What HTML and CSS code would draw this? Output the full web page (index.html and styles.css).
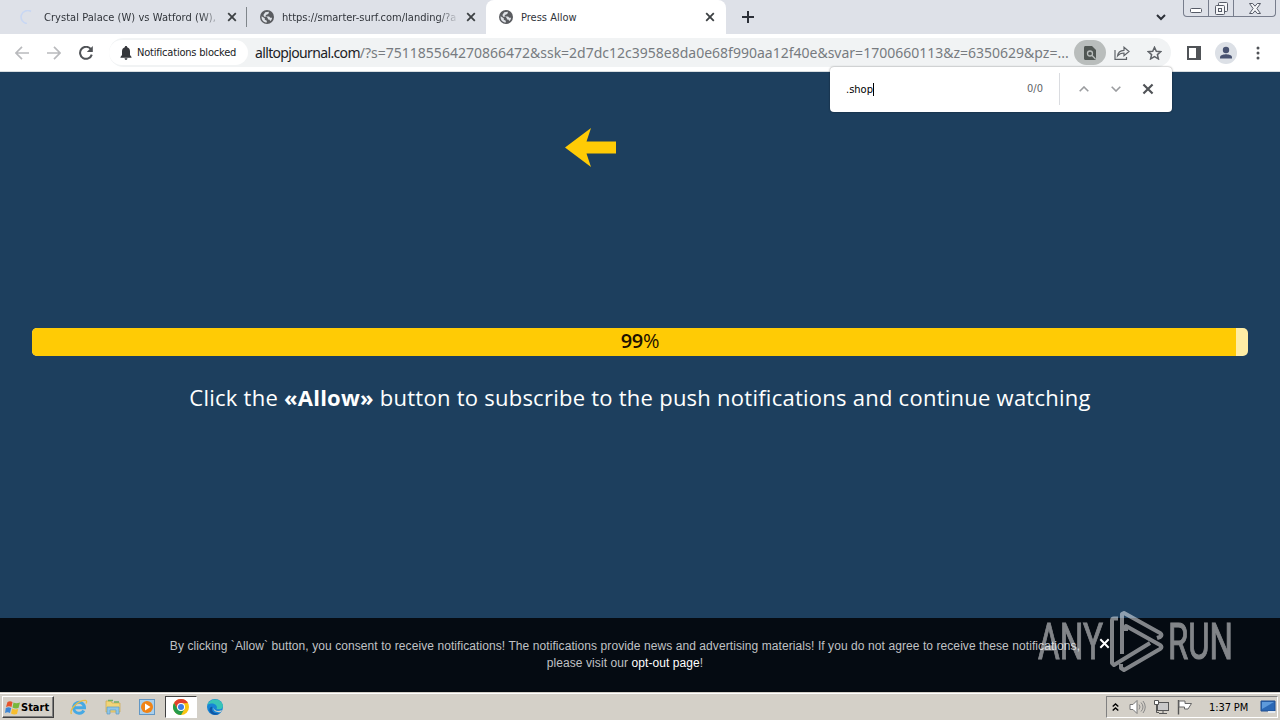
FILE: index.html
```html
<!DOCTYPE html>
<html lang="en">

<head>
  <meta charset="UTF-8">
  <meta name="viewport" content="width=device-width, initial-scale=1.0">
  <title>Press Allow</title>
  <link rel="stylesheet" href="styles.css">
</head>

<body>
  <svg class="defs" width="0" height="0">
    <symbol id="x" viewBox="0 0 10 10">
      <path d="M1.2 1.2l7.6 7.6M8.8 1.2L1.2 8.8" fill="none" stroke="currentColor" stroke-width="1.8" />
    </symbol>
    <symbol id="globe" viewBox="0 0 14 14">
      <circle cx="7" cy="7" r="7" fill="#5a5c60" />
      <path d="M1.6 6.2l3.2 2.1v1.4l2 1v1.8C3.6 12.400 1.200 9.800 1.600 6.200zM5.200 2.200l3.600-.5v1.500l-1.500 1.300-1.500.4v1.500h3.300l1.200 1.300h1.800c-.2 1.500-.8 2.500-1.800 3.400l-1-1.500-1.300-.2-.3-1.500-1.200-1.200H4.200l-.8-1.800z" fill="#dee1e6" />
    </symbol>
  </svg>

  <div class="screen">
    <!-- Tab strip -->
    <div class="tabs">
      <div class="tab tab-first">
        <svg class="fav" viewBox="0 0 14 14"><path d="M11 1.500A6.500 6.500 0 1 0 7 13.500" fill="none" stroke="#c8d7f3" stroke-width="1.600" /></svg>
        <span class="tab-title t1">Crystal Palace (W) vs Watford (W),</span>
        <svg class="close"><use href="#x" /></svg>
      </div>
      <div class="tab tab-second">
        <svg class="fav"><use href="#globe" /></svg>
        <span class="tab-title t2">https://smarter-surf.com/landing/?a</span>
        <svg class="close"><use href="#x" /></svg>
      </div>
      <div class="tab active">
        <svg class="fav"><use href="#globe" /></svg>
        <span class="tab-title t3">Press Allow</span>
        <svg class="close"><use href="#x" /></svg>
      </div>
      <svg class="plus" viewBox="0 0 12 12"><path d="M6 0v12M0 6h12" stroke="#2c3038" stroke-width="2" /></svg>
      <svg class="tab-search" viewBox="0 0 10 7"><path d="M1 1l4 4 4-4" fill="none" stroke="#2c3038" stroke-width="2" /></svg>
      <div class="win-buttons">
        <span class="win-min"><svg width="12" height="5"><rect x=".5" y=".5" width="11" height="4" rx="1" fill="#fff" stroke="#565b67" /></svg></span>
        <span class="win-max"><svg width="13" height="13" fill="#f5f6f8" stroke="#565b67"><rect x="3.500" y=".5" width="9" height="9" rx="1" /><rect x=".5" y="3.500" width="9" height="9" rx="1" /><rect x="3.500" y="6.500" width="3" height="3" /></svg></span>
        <span class="win-close"><svg width="12" height="11" viewBox="0 0 12 11"><path d="M.5.500h3.200L6 3.200 8.300.500h3.200L7.900 5.500l3.600 5H8.300L6 7.800l-2.300 2.700H.5l3.600-5z" fill="#f5f6f8" stroke="#565b67" /></svg></span>
      </div>
    </div>

    <!-- Toolbar -->
    <div class="toolbar">
      <svg class="nav" viewBox="0 0 14 14"><path d="M14 7H1M7 .8L.9 7 7 13.200" fill="none" stroke="#b9babd" stroke-width="1.700" /></svg>
      <svg class="nav forward" viewBox="0 0 14 14"><path d="M0 7h13M7 .8L13.100 7 7 13.200" fill="none" stroke="#b9babd" stroke-width="1.700" /></svg>
      <svg class="nav reload" viewBox="0 0 14 14"><path d="M12 3.400A6 6 0 1 0 12.800 8.600" fill="none" stroke="#505357" stroke-width="2" /><path d="M13.800 0v6H7.800z" fill="#505357" /></svg>
      <div class="omnibox">
        <div class="chip">
          <svg width="12" height="14" viewBox="0 0 12 14"><path d="M6 0c.8 0 1.200.5 1.200 1.300C9.200 1.900 10 3.500 10 5.500V9l1.500 2v.7H.5V11L2 9V5.500c0-2 .8-3.600 2.800-4.200C4.800.5 5.200 0 6 0zM4.600 12.300h2.800C7.400 14.400 4.600 14.400 4.600 12.300z" fill="#35373b" /></svg>
          <span class="chip-text">Notifications blocked</span>
        </div>
        <div class="url"><span class="host">alltopjournal.com</span><span class="query">/?s=751185564270866472&amp;ssk=2d7dc12c3958e8da0e68f990aa12f40e&amp;svar=1700660113&amp;z=6350629&amp;pz=...</span></div>
        <span class="find-icon"><svg width="12" height="14" viewBox="0 0 12 14"><path d="M1.500 0H8l4 4v8.500c0 .9-.6 1.500-1.500 1.500h-9C.6 14 0 13.400 0 12.500v-11C0 .6.600 0 1.500 0z" fill="#505653" /><circle cx="6" cy="7.500" r="2.500" fill="none" stroke="#b9bdbc" stroke-width="1.300" /><path d="M7.800 9.300L11.500 13" stroke="#b9bdbc" stroke-width="1.300" /></svg></span>
        <svg class="share" width="16" height="14" viewBox="0 0 16 14"><path d="M1 4v9.300h11.500V11M3.500 10c.4-4 3-5.500 6.500-5.700V1.200L15 5.500 10 9.800V7C7.200 7 5.200 7.800 3.500 10z" fill="none" stroke="#5f6368" stroke-width="1.200" /></svg>
        <svg class="star" width="15" height="14" viewBox="0 0 15 14"><path d="M7.500 1.300l1.800 4 4.400.4-3.300 2.900 1 4.300-3.900-2.300-3.900 2.300 1-4.300-3.300-2.900 4.400-.4z" fill="none" stroke="#5f6368" stroke-width="1.500" /></svg>
      </div>
      <svg class="panel" width="14" height="14"><rect x="1" y="1" width="12" height="12" fill="none" stroke="#505357" stroke-width="2" /><path d="M9 1h4v12H9z" fill="#505357" /></svg>
      <svg class="avatar" width="22" height="22"><circle cx="11" cy="11" r="11" fill="#dce0e6" /><circle cx="11" cy="8" r="3.200" fill="#485270" /><path d="M5 16.500v-1.300C5 13 9 12.200 11 12.200s6 .8 6 3v1.300z" fill="#485270" /></svg>
      <svg class="dots" width="4" height="14" fill="#505357"><circle cx="2" cy="2" r="1.500" /><circle cx="2" cy="7" r="1.500" /><circle cx="2" cy="12" r="1.500" /></svg>
    </div>

    <!-- Web page -->
    <div class="page">
      <svg class="arrow" width="51" height="39" viewBox="0 0 51 39"><path d="M0 19.500L26 0l-4.500 13.500H51v12H21.500L26 39z" fill="#ffcb05" /></svg>
      <div class="progress">
        <div class="progress-fill" style="width: 99%"></div>
        <div class="progress-label"><b>99</b>%</div>
      </div>
      <p class="message">Click the <b>«Allow»</b> button to subscribe to the push notifications and continue watching</p>
    </div>

    <div class="consent">
      <p>By clicking `Allow` button, you consent to receive notifications! The notifications provide news and advertising materials! If you do not agree to receive these notifications,<br>please visit our <a>opt-out page</a>!</p>
      <svg class="consent-close"><use href="#x" /></svg>
    </div>

    <!-- Taskbar -->
    <div class="taskbar">
      <div class="start">
        <svg width="16" height="15" viewBox="0 0 16 15"><path d="M2.500 2Q5 .5 7.500 2L6.500 7Q4 5.500 1 7z" fill="#e6532b" /><path d="M8.500 2.500Q11 4 15 2.500L13.500 8Q10.500 9 7.500 7.500z" fill="#78b83b" /><path d="M.8 8Q3.500 6.500 6.200 8L5 13Q2.500 11.500 0 13z" fill="#3d86d5" /><path d="M7.200 8.500Q10 10 13.200 9L12 14Q9 15 6 13.500z" fill="#f7bd2d" /></svg>
        <b>Start</b>
      </div>
      <span class="task"><svg width="18" height="17" viewBox="0 0 18 17"><path d="M13.800 11.500A5.500 5.500 0 1 1 14.500 8.800H5" fill="none" stroke="#46a9e4" stroke-width="3" /><path d="M1.500 15C-1 11 8 1 15.500 1.300c1.600.4 1.200 2 .5 3.200" fill="none" stroke="#e8bd45" stroke-width="1.300" /></svg></span>
      <span class="task"><svg width="16" height="16" viewBox="0 0 16 16"><path d="M1 2h5l1 2h8v9H1z" fill="#f1d577" stroke="#cda94a" stroke-width=".7" /><path d="M3 1.500h5M9 3h5" stroke="#6fae64" stroke-width="1.500" /><path d="M2 8h12v7h-3v-4H5v4H2z" fill="#8fc6e8" stroke="#5b9cc5" stroke-width=".7" /></svg></span>
      <span class="task"><svg width="16" height="16"><rect x=".5" y=".5" width="15" height="15" fill="#a9cfec" stroke="#6297c4" /><circle cx="8" cy="8" r="6" fill="#f08316" /><rect x="4" y="4" width="8" height="8" rx="1" fill="#f08316" /><path d="M6 4.500l5.500 3.500L6 11.500z" fill="#fff" /></svg></span>
      <span class="task current"><svg width="16" height="16" viewBox="0 0 16 16"><circle cx="8" cy="8" r="8" fill="#f9c513" /><path d="M1.070 4A8 8 0 0 1 14.930 4L8 4.500 4.500 10z" fill="#e2402f" /><path d="M1.070 4A8 8 0 0 0 8 16l3.500-6H4.500z" fill="#259b4b" /><circle cx="8" cy="8" r="4" fill="#fff" /><circle cx="8" cy="8" r="3" fill="#3c7de6" /></svg></span>
      <span class="task"><svg width="16" height="16" viewBox="0 0 16 16"><circle cx="8" cy="8" r="8" fill="#1785d5" /><path d="M.5 6C2-1 14-2 15.900 6.500 16 10 13 11 9.500 10 11 7 8 4.500 5 4.500 3 4.500 1.500 5 .5 6z" fill="#38c4b7" /><path d="M5.500 8c-2 4 2 7.500 7.500 6.200C9 17.500 2 15.500 2.500 10.500 2.800 8.500 4 7.500 5.500 8z" fill="#1057a5" /><path d="M6.500 8.500C7 12 11 13 15 11l-1.200 1.900C10 14 6 12 6.500 8.500z" fill="#d5d1c8" /></svg></span>
      <div class="tray">
        <svg class="chev" width="7" height="8"><path d="M.7 3.500L3.500 1l2.800 2.500M.7 7.500L3.500 5l2.800 2.500" fill="none" stroke="#000" stroke-width="1.400" /></svg>
        <svg class="sound" width="17" height="16"><path d="M1 5.500h3L8 1.500v13l-4-4H1z" fill="#fff" stroke="#777" /><path d="M10 5.500q2 2.500 0 5M12 3.500q4 4.500 0 9M14 2q4.500 6 0 12" fill="none" stroke="#888" /></svg>
        <svg class="net" width="17" height="16"><rect x="4.500" y="3.500" width="11" height="8" fill="#c9c9c9" stroke="#555" /><path d="M6 14.500h8M10 12v2M3.500 5.500v8H6" fill="none" stroke="#555" /><path d="M1.500 1.500h4v4h-4z" fill="#fff" stroke="#555" /></svg>
        <svg class="flag" width="17" height="16"><path d="M2.500 1v14.500" stroke="#555" stroke-width="1.400" /><path d="M3 2h6v2.500h6.500L12 10H8.500V8H3z" fill="#fff" stroke="#666" /></svg>
        <span class="clock">1:37 PM</span>
        <svg class="desktop" width="16" height="14"><path d="M1 1h14v10H1z" fill="#2b68b5" stroke="#204f91" /><path d="M2 2h12L2 9z" fill="#5e9adb" /><path d="M8 11h7v2H8z" fill="#e2e8ee" /></svg>
      </div>
    </div>

    <!-- Find bar over the page -->
    <div class="findbar">
      <span class="find-text">.shop</span>
      <span class="find-count">0/0</span>
      <svg class="find-nav" viewBox="0 0 10 6"><path d="M.7 5.300L5 1l4.300 4.300" fill="none" stroke="#9a9c9f" stroke-width="1.600" /></svg>
      <svg class="find-nav" viewBox="0 0 10 6"><path d="M.7.700L5 5 9.300.700" fill="none" stroke="#9a9c9f" stroke-width="1.600" /></svg>
      <svg class="find-close"><use href="#x" /></svg>
    </div>

    <svg class="watermark" width="204" height="62" viewBox="0 0 204 62">
      <text x="1" y="49" textLength="65" lengthAdjust="spacingAndGlyphs">ANY</text>
      <text x="131" y="49" textLength="65" lengthAdjust="spacingAndGlyphs">RUN</text>
      <g fill="none" stroke="#fff" stroke-width="4" stroke-linejoin="round">
        <path d="M81 8.500H77q-2 0-2 2V53l2 2 36-22" />
        <path d="M85 44V4l2-1 36 20q3 2 0 4l-3 1" />
        <path d="M84 54v4l3 2 36-21q3-2 0-4L89 16v5" />
      </g>
    </svg>
  </div>
</body>

</html>
```
FILE: styles.css
```css
* {
  box-sizing: border-box;
}

body {
  margin: 0;
  font-family: "DejaVu Sans Condensed", "DejaVu Sans", sans-serif;
  font-size: 11px;
  color: #202124;
}

svg {
  display: block;
  flex: none;
}

.defs {
  position: absolute;
}

.screen {
  position: relative;
  width: 1280px;
  height: 720px;
  display: flex;
  flex-direction: column;
  overflow: hidden;
}

/* Tab strip */
.tabs {
  height: 34px;
  flex: none;
  display: flex;
  align-items: center;
  background: #dee1e8;
}

.tab {
  height: 34px;
  display: flex;
  align-items: center;
}

.tab-first {
  width: 247px;
  padding: 0 10px 0 20px;
  background: linear-gradient(#80868b, #80868b) right center / 1px 20px no-repeat;
}

.tab-second {
  width: 239px;
  padding: 0 10px 0 13px;
  border-bottom-right-radius: 8px;
}

.tab.active {
  width: 240px;
  padding: 0 11px 0 13px;
  background: #fff;
  border-radius: 8px 8px 0 0;
}

.fav {
  width: 14px;
  height: 14px;
}

.tab-title {
  flex: 1;
  margin: 0 11px 0 8px;
  white-space: nowrap;
  overflow: hidden;
  color: #30343a;
}

.t1 {
  margin-left: 10px;
  margin-right: 5px;
  letter-spacing: 0.05px;
}

.t1,
.t2 {
  -webkit-mask-image: linear-gradient(to right, #000 88%, transparent);
  mask-image: linear-gradient(to right, #000 88%, transparent);
}

.t2 {
  margin-right: 7px;
}

.close {
  width: 10px;
  height: 10px;
  color: #3c4043;
}

.plus {
  width: 12px;
  height: 12px;
  margin-left: 16px;
}

.tab-search {
  width: 10px;
  height: 7px;
  margin-left: auto;
  margin-right: 17px;
}

.win-buttons {
  align-self: flex-start;
  width: 93px;
  height: 17px;
  margin-right: 4px;
  display: flex;
  border: 1px solid #777d8c;
  border-top: none;
  border-radius: 0 0 4px 4px;
}

.win-buttons span {
  display: flex;
  justify-content: center;
  align-items: center;
}

.win-min {
  width: 25px;
  padding-top: 5px;
  border-right: 1px solid #777d8c;
}

.win-max {
  width: 25px;
  border-right: 1px solid #777d8c;
}

.win-close {
  flex: 1;
}

/* Toolbar */
.toolbar {
  height: 38px;
  flex: none;
  display: flex;
  align-items: center;
  padding: 0 20px 0 15px;
  background: #fff;
  border-bottom: 1px solid #d8dde0;
}

.nav {
  width: 14px;
  height: 14px;
}

.forward,
.reload {
  margin-left: 18px;
}

.omnibox {
  width: 1062px;
  height: 29px;
  margin-left: 16px;
  display: flex;
  align-items: center;
  background: #f1f3f4;
  border-radius: 15px;
}

.chip {
  width: 139px;
  height: 25px;
  padding-left: 11px;
  display: flex;
  align-items: center;
  background: #fff;
  border-radius: 13px;
}

.chip-text {
  margin-left: 5px;
  letter-spacing: -0.2px;
  white-space: nowrap;
}

.url {
  width: 811px;
  margin-left: 7px;
  font-family: "Noto Sans", sans-serif;
  font-size: 14px;
  white-space: nowrap;
}

.host {
  letter-spacing: -0.65px;
}

.query {
  color: #777b80;
}

.find-icon {
  width: 32px;
  height: 25px;
  margin-left: 8px;
  display: flex;
  align-items: center;
  justify-content: center;
  background: #b9bdbc;
  border-radius: 13px;
}

.share {
  margin-left: 8px;
}

.star {
  margin-left: 17px;
}

.panel {
  margin-left: 16px;
}

.avatar {
  margin-left: 14px;
}

.dots {
  margin-left: 19px;
}

/* Web page */
.page {
  height: 546px;
  flex: none;
  padding: 56px 32px 0;
  background: #1d3f5e;
}

.arrow {
  margin-left: 533px;
}

.progress {
  position: relative;
  height: 28px;
  margin-top: 161px;
  background: #ffeda5;
  border-radius: 5px;
  overflow: hidden;
}

.progress-fill {
  height: 28px;
  background: #ffcb05;
}

.progress-label {
  position: absolute;
  inset: 0;
  text-align: center;
  font-family: "Open Sans", sans-serif;
  font-size: 20px;
  line-height: 26px;
  letter-spacing: -0.3px;
  color: #1c1000;
}

.progress-label b {
  font-weight: 600;
}

.message {
  margin: 26px 0 0;
  text-align: center;
  white-space: nowrap;
  font-family: "Open Sans", sans-serif;
  font-size: 22px;
  line-height: 30px;
  letter-spacing: 0.25px;
  color: #fff;
}

/* Consent bar */
.consent {
  height: 74px;
  flex: none;
  display: flex;
  align-items: flex-start;
  padding: 20px 0 0 165px;
  background: #050b12;
}

.consent p {
  width: 920px;
  margin: 0;
  text-align: center;
  white-space: nowrap;
  font-family: "Liberation Sans", Arial, sans-serif;
  font-size: 12px;
  line-height: 17px;
  letter-spacing: 0.08px;
  color: #c0c2c5;
}

.consent a {
  color: #fff;
}

.consent-close {
  width: 11px;
  height: 11px;
  margin: 0 0 0 14px;
  color: #fff;
}

/* Taskbar */
.taskbar {
  height: 28px;
  flex: none;
  display: flex;
  align-items: center;
  padding: 2px 2px 0;
  background: #d4d0c8;
  box-shadow: inset 0 1px #d4d0c8, inset 0 2px #fff;
}

.start {
  width: 52px;
  height: 22px;
  margin-right: 9px;
  padding-left: 2px;
  display: flex;
  align-items: center;
  border: 1px solid;
  border-color: #fff #404040 #404040 #fff;
  box-shadow: inset -1px -1px #808080;
  color: #000;
}

.task {
  width: 32px;
  height: 22px;
  margin-right: 2px;
  display: flex;
  align-items: center;
  justify-content: center;
}

.task.current {
  background: #fff;
  border: 1px solid;
  border-color: #404040 #fff #fff #404040;
}

.tray {
  width: 172px;
  height: 22px;
  margin-left: auto;
  padding-left: 5px;
  display: flex;
  align-items: center;
  border: 1px solid;
  border-color: #808080 #fff #fff #808080;
}

.sound {
  margin-left: 10px;
}

.net {
  margin-left: 7px;
}

.flag {
  margin-left: 6px;
}

.clock {
  width: 40px;
  margin-left: 16px;
  letter-spacing: -0.1px;
  white-space: nowrap;
  color: #000;
}

.desktop {
  margin-left: 11px;
}

/* Find bar */
.findbar {
  position: absolute;
  left: 830px;
  top: 67px;
  width: 342px;
  height: 45px;
  padding: 0 18px 1px 16px;
  display: flex;
  align-items: center;
  background: #fff;
  border-radius: 4px;
  box-shadow: 0 0 2px rgba(0, 0, 0, 0.5);
}

.find-text {
  border-right: 1px solid #000;
  color: #000;
}

.find-count {
  height: 32px;
  margin-left: auto;
  margin-right: 9px;
  padding-right: 16px;
  line-height: 32px;
  border-right: 1px solid #dadce0;
  color: #5f6368;
}

.find-nav {
  width: 10px;
  height: 6px;
  margin: 0 12px 0 10px;
}

.find-close {
  width: 12px;
  height: 12px;
  margin-left: 9px;
  color: #505357;
}

.watermark {
  position: absolute;
  left: 1037px;
  top: 610px;
  opacity: 0.5;
}

.watermark text {
  font-family: Roboto, sans-serif;
  font-size: 50px;
  fill: #fff;
  stroke: #fff;
  stroke-width: 1px;
}
```
